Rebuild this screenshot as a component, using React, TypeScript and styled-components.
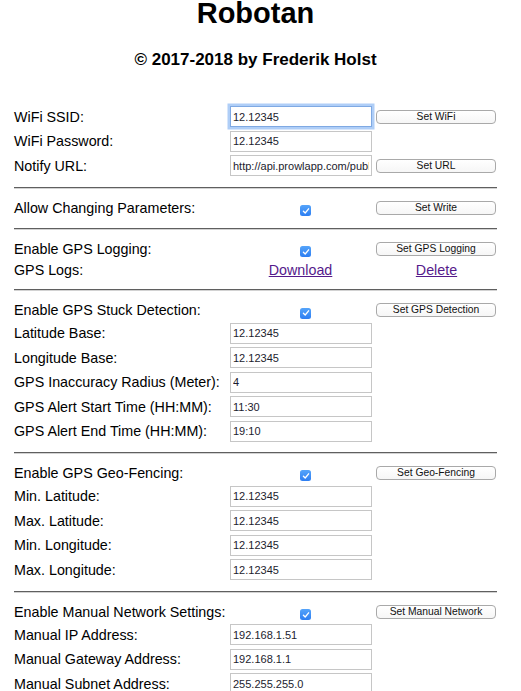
import React from "react";
import styled, { createGlobalStyle } from "styled-components";

const GlobalStyle = createGlobalStyle`
  html, body { margin: 0; padding: 0; background: #ffffff; }
  body { font-family: "Liberation Sans", Arial, Helvetica, sans-serif; color: #000; }
`;

const Page = styled.div`
  width: 495px;
  margin-left: 8px;
`;

const Title = styled.h1`
  margin: 0;
  font-size: 29px;
  line-height: 26px;
  font-weight: bold;
  text-align: center;
`;

const Subtitle = styled.h3`
  margin: 23.6px 0 0;
  font-size: 17px;
  line-height: 20px;
  font-weight: bold;
  text-align: center;
`;

const Form = styled.div`
  margin: 35px 0 0 6px;
  width: 483px;
  display: flex;
  flex-direction: column;
`;

const Row = styled.div<{ $h: number }>`
  display: grid;
  grid-template-columns: 216px 146px 121px;
  align-items: center;
  height: ${(p) => p.$h}px;
`;

const Label = styled.span`
  font-size: 14.3px;
  white-space: nowrap;
`;

const TextInput = styled.input<{ $focused?: boolean }>`
  box-sizing: border-box;
  width: 142px;
  height: 21px;
  margin: 0;
  padding: 0 2px;
  border: 1px solid ${(p) => (p.$focused ? "#7fa9e3" : "#c6c6c6")};
  border-radius: 0;
  font-family: "Liberation Sans", Arial, sans-serif;
  font-size: 11px;
  color: #1c1c2e;
  background: #fff;
  outline: none;
  box-shadow: ${(p) => (p.$focused ? "0 0 0 2.5px rgba(110, 165, 240, 0.55)" : "none")};
`;

const Button = styled.button`
  box-sizing: border-box;
  width: 120px;
  height: 14px;
  margin: 0;
  padding: 0;
  border: 1px solid #a9a9a9;
  border-radius: 4px;
  background: linear-gradient(#ffffff, #f6f6f6);
  font-family: "Liberation Sans", Arial, sans-serif;
  font-size: 10.3px;
  line-height: 12px;
  color: #111;
  text-align: center;
`;

const Check = styled.span`
  box-sizing: border-box;
  display: inline-flex;
  align-items: center;
  justify-content: center;
  width: 11px;
  height: 11px;
  margin: 6px 0 0 70px;
  border-radius: 2.5px;
  background: linear-gradient(#55a4fa, #2d7ef2);
  justify-self: start;
`;

const LinkCell = styled.a<{ $width: number }>`
  width: ${(p) => p.$width}px;
  text-align: center;
  font-size: 14.3px;
  color: #551a8b;
  text-decoration: underline;
  cursor: pointer;
`;

const Separator = styled.hr`
  margin: 9px 0 7.5px;
  height: 0;
  border: 0;
  border-top: 1px solid #5f5f5f;
  border-bottom: 1px solid #d2d2d2;
  width: 483px;
`;

const Checkbox = () => (
  <Check>
    <svg width="8" height="8" viewBox="0 0 8 8">
      <path d="M1.4 4.2 L3.2 6 L6.6 1.8" fill="none" stroke="#fff" strokeWidth="1.3" strokeLinecap="round" strokeLinejoin="round" />
    </svg>
  </Check>
);

const INPUT_H = 24.4;
const CHECK_H = 22.5;
const LINK_H = 20.5;

type InputRowProps = { label: string; value: string; focused?: boolean; action?: string };

const InputRow = ({ label, value, focused, action }: InputRowProps) => (
  <Row $h={INPUT_H}>
    <Label>{label}</Label>
    <TextInput $focused={focused} defaultValue={value} />
    {action ? <Button>{action}</Button> : <span />}
  </Row>
);

const CheckRow = ({ label, action }: { label: string; action: string }) => (
  <Row $h={CHECK_H}>
    <Label>{label}</Label>
    <Checkbox />
    <Button>{action}</Button>
  </Row>
);

export default function App() {
  return (
    <>
      <GlobalStyle />
      <Page>
        <Title>Robotan</Title>
        <Subtitle>© 2017-2018 by Frederik Holst</Subtitle>
        <Form>
          <InputRow label="WiFi SSID:" value="12.12345" focused action="Set WiFi" />
          <InputRow label="WiFi Password:" value="12.12345" />
          <InputRow label="Notify URL:" value="http://api.prowlapp.com/publicapi/add" action="Set URL" />
          <Separator />
          <CheckRow label="Allow Changing Parameters:" action="Set Write" />
          <Separator />
          <CheckRow label="Enable GPS Logging:" action="Set GPS Logging" />
          <Row $h={LINK_H}>
            <Label>GPS Logs:</Label>
            <LinkCell $width={141}>Download</LinkCell>
            <LinkCell $width={121}>Delete</LinkCell>
          </Row>
          <Separator />
          <CheckRow label="Enable GPS Stuck Detection:" action="Set GPS Detection" />
          <InputRow label="Latitude Base:" value="12.12345" />
          <InputRow label="Longitude Base:" value="12.12345" />
          <InputRow label="GPS Inaccuracy Radius (Meter):" value="4" />
          <InputRow label="GPS Alert Start Time (HH:MM):" value="11:30" />
          <InputRow label="GPS Alert End Time (HH:MM):" value="19:10" />
          <Separator />
          <CheckRow label="Enable GPS Geo-Fencing:" action="Set Geo-Fencing" />
          <InputRow label="Min. Latitude:" value="12.12345" />
          <InputRow label="Max. Latitude:" value="12.12345" />
          <InputRow label="Min. Longitude:" value="12.12345" />
          <InputRow label="Max. Longitude:" value="12.12345" />
          <Separator />
          <CheckRow label="Enable Manual Network Settings:" action="Set Manual Network" />
          <InputRow label="Manual IP Address:" value="192.168.1.51" />
          <InputRow label="Manual Gateway Address:" value="192.168.1.1" />
          <InputRow label="Manual Subnet Address:" value="255.255.255.0" />
        </Form>
      </Page>
    </>
  );
}
